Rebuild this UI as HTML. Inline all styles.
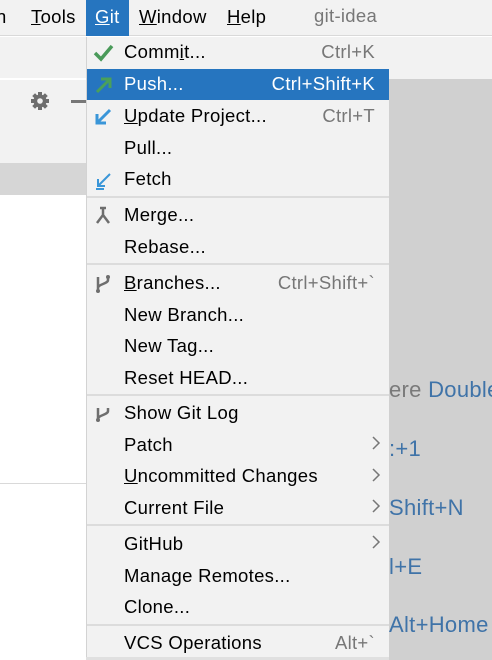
<!DOCTYPE html><html><head><style>
*{margin:0;padding:0;box-sizing:border-box}
body{width:492px;height:660px;overflow:hidden;background:#fff;font-family:"Liberation Sans","Noto Sans CJK SC",sans-serif;font-size:18.5px;letter-spacing:0.3px;position:relative;color:#000}
.a{position:absolute}
.it{position:absolute;left:124px;line-height:20px;white-space:nowrap}
.sc{position:absolute;right:117px;color:#777;line-height:20px;white-space:nowrap}
.ar{position:absolute;left:371px}
.sep{position:absolute;left:87px;width:302px;height:2px;background:#dcdcdc}
u{text-decoration:underline}
</style></head><body>
<div class="a" style="left:0;top:0;width:492px;height:36px;background:#f2f2f2;border-bottom:1px solid #d9d9d9"></div>
<div class="a" style="left:-4px;top:6px;line-height:22px">n</div>
<div class="a" style="left:31px;top:6px;line-height:22px"><u>T</u>ools</div>
<div class="a" style="left:86px;top:0;width:43px;height:36px;background:#2675bf"></div>
<div class="a" style="left:95px;top:6px;line-height:22px;color:#fff"><u>G</u>it</div>
<div class="a" style="left:139px;top:6px;line-height:22px"><u>W</u>indow</div>
<div class="a" style="left:227px;top:6px;line-height:22px"><u>H</u>elp</div>
<div class="a" style="left:314px;top:5px;line-height:22px;color:#777">git-idea</div>
<div class="a" style="left:0;top:37px;width:87px;height:42px;background:#f2f2f2;border-bottom:1px solid #fff"></div>
<div class="a" style="left:0;top:80px;width:87px;height:83px;background:#f2f2f2"></div>
<div class="a" style="left:0;top:163px;width:87px;height:32px;background:#d6d6d6"></div>
<div class="a" style="left:0;top:483px;width:87px;height:1px;background:#d9d9d9"></div>
<svg class="a" style="left:30px;top:91px" width="20" height="20" viewBox="0 0 20 20"><g fill="#6e6e6e"><circle cx="10" cy="10" r="6.5"/><rect x="8" y="1" width="4" height="18"/><rect x="1" y="8" width="18" height="4"/><rect x="8" y="1" width="4" height="18" transform="rotate(45 10 10)"/><rect x="8" y="1" width="4" height="18" transform="rotate(-45 10 10)"/></g><circle cx="10" cy="10" r="2.8" fill="#f2f2f2"/></svg>
<div class="a" style="left:71px;top:100px;width:16px;height:3px;background:#777"></div>
<div class="a" style="left:389px;top:37px;width:103px;height:42px;background:#f2f2f2"></div>
<div class="a" style="left:389px;top:79px;width:103px;height:581px;background:#d0d0d0"></div>
<div class="a" style="left:389px;top:378px;font-size:22px;color:#7a7a7a;line-height:24px;white-space:nowrap">ere <span style="color:#3f73a8">Double</span></div>
<div class="a" style="left:389px;top:437px;font-size:22px;color:#3f73a8;line-height:24px">:+1</div>
<div class="a" style="left:389px;top:496px;font-size:22px;color:#3f73a8;line-height:24px">Shift+N</div>
<div class="a" style="left:389px;top:555px;font-size:22px;color:#3f73a8;line-height:24px">l+E</div>
<div class="a" style="left:389px;top:613px;font-size:22px;color:#3f73a8;line-height:24px;white-space:nowrap">Alt+Home</div>
<div class="a" style="left:86px;top:37px;width:303px;height:620px;background:#f2f2f2;border-left:1px solid #d3d3d3"></div>
<div class="a" style="left:86px;top:657px;width:303px;height:3px;background:#e0e0e0"></div>
<div class="a" style="left:87px;top:69px;width:302px;height:31px;background:#2675bf"></div>
<svg class="a" style="left:92px;top:42px" width="24" height="22"><path d="M3 11l6 6L20 4" stroke="#4a9a5a" stroke-width="3.5" fill="none"/></svg>
<svg class="a" style="left:92px;top:74px" width="24" height="22"><path d="M5 18L18 5M9 5h9v9" stroke="#4aa05a" stroke-width="3" fill="none"/></svg>
<svg class="a" style="left:92px;top:106px" width="24" height="22"><path d="M18 4L5 17M5 8v9h9" stroke="#3a96d8" stroke-width="3" fill="none"/></svg>
<svg class="a" style="left:92px;top:170px" width="24" height="22"><path d="M18 4L6 16M6 9v7h7M4 19h8" stroke="#3a96d8" stroke-width="2" fill="none"/></svg>
<svg class="a" style="left:92px;top:205px" width="24" height="22"><path d="M8 3h6M11 3v7L5 18M11 10l6 8" stroke="#6e6e6e" stroke-width="2.5" fill="none"/></svg>
<svg class="a" style="left:92px;top:273px" width="24" height="22"><path d="M6 4v14M16 4v3c0 4-10 4-10 8" stroke="#6e6e6e" stroke-width="2.5" fill="none"/><circle cx="6" cy="18" r="2" fill="#6e6e6e"/><circle cx="16" cy="4" r="2" fill="#6e6e6e"/></svg>
<svg class="a" style="left:92px;top:402px" width="24" height="22"><path d="M6 6v12M16 6v3c0 4-10 4-10 8" stroke="#6e6e6e" stroke-width="2.5" fill="none"/><circle cx="6" cy="18" r="2" fill="#6e6e6e"/></svg>
<div class="it" style="top:42px">Comm<u>i</u>t...</div><div class="sc" style="top:42px">Ctrl+K</div>
<div class="it" style="top:74px;color:#fff">Push...</div><div class="sc" style="top:74px;color:#fff">Ctrl+Shift+K</div>
<div class="it" style="top:106px"><u>U</u>pdate Project...</div><div class="sc" style="top:106px">Ctrl+T</div>
<div class="it" style="top:138px">Pull...</div>
<div class="it" style="top:169px">Fetch</div>
<div class="sep" style="top:196px"></div>
<div class="it" style="top:205px">Merge...</div>
<div class="it" style="top:237px">Rebase...</div>
<div class="sep" style="top:263px"></div>
<div class="it" style="top:273px"><u>B</u>ranches...</div><div class="sc" style="top:273px">Ctrl+Shift+`</div>
<div class="it" style="top:305px">New Branch...</div>
<div class="it" style="top:336px">New Tag...</div>
<div class="it" style="top:368px">Reset HEAD...</div>
<div class="sep" style="top:394px"></div>
<div class="it" style="top:403px">Show Git Log</div>
<svg class="ar" style="top:436px" width="10" height="14"><path d="M2 1l6 6-6 6" stroke="#777" stroke-width="1.5" fill="none"/></svg>
<div class="it" style="top:435px">Patch</div>
<div class="it" style="top:466px"><u>U</u>ncommitted Changes</div>
<svg class="ar" style="top:468px" width="10" height="14"><path d="M2 1l6 6-6 6" stroke="#777" stroke-width="1.5" fill="none"/></svg>
<div class="it" style="top:498px">Current File</div>
<svg class="ar" style="top:499px" width="10" height="14"><path d="M2 1l6 6-6 6" stroke="#777" stroke-width="1.5" fill="none"/></svg>
<div class="sep" style="top:524px"></div>
<div class="it" style="top:534px">GitHub</div>
<svg class="ar" style="top:535px" width="10" height="14"><path d="M2 1l6 6-6 6" stroke="#777" stroke-width="1.5" fill="none"/></svg>
<div class="it" style="top:566px">Manage Remotes...</div>
<div class="it" style="top:597px">Clone...</div>
<div class="sep" style="top:624px"></div>
<div class="it" style="top:633px">VCS Operations</div><div class="sc" style="top:633px">Alt+`</div>
</body></html>
